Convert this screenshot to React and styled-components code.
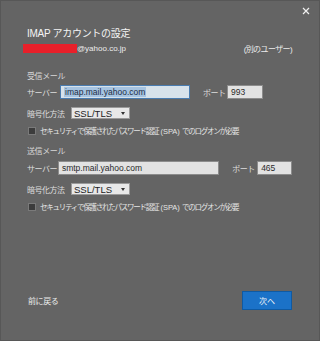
import React from 'react'
import styled, { createGlobalStyle } from 'styled-components'

const GlobalStyle = createGlobalStyle`
  html, body {
    margin: 0;
    padding: 0;
    background: #646464;
  }
  * {
    box-sizing: border-box;
  }
`

function SpaOption() {
  return (
    <CheckRow top={7}>
      <CheckBox />
      <CheckText>
        セキュリティで保護されたパスワード認証<Latin> (SPA) </Latin>でのログオンが必要
      </CheckText>
    </CheckRow>
  )
}

export default function App() {
  return (
    <>
      <GlobalStyle />
      <Dialog>
        <TopBar>
          <CloseButton aria-label="close">
            <svg width="8" height="8" viewBox="0 0 8 8">
              <path d="M1 1 L7 7 M7 1 L1 7" stroke="#f0f0f0" strokeWidth="1.2" fill="none" />
            </svg>
          </CloseButton>
        </TopBar>
        <Body>
          <Title>IMAP アカウントの設定</Title>
          <AccountRow>
            <Email>
              <Redact />
              @yahoo.co.jp
            </Email>
            <OtherUser>(別のユーザー)</OtherUser>
          </AccountRow>

          <SectionLabel top={16}>受信メール</SectionLabel>
          <FieldRow top={2}>
            <Label width={33}>サーバー</Label>
            <TextBox width={130} focused>
              <Selected>imap.mail.yahoo.com</Selected>
            </TextBox>
            <Label width={24} gap={13}>ポート</Label>
            <TextBox width={36}>993</TextBox>
          </FieldRow>
          <FieldRow top={8}>
            <Label width={44}>暗号化方法</Label>
            <Select>
              SSL/TLS
              <Arrow />
            </Select>
          </FieldRow>
          <SpaOption />

          <SectionLabel top={11}>送信メール</SectionLabel>
          <FieldRow top={3}>
            <Label width={31}>サーバー</Label>
            <TextBox width={162}>smtp.mail.yahoo.com</TextBox>
            <Label width={25} gap={13}>ポート</Label>
            <TextBox width={35}>465</TextBox>
          </FieldRow>
          <FieldRow top={8}>
            <Label width={44}>暗号化方法</Label>
            <Select>
              SSL/TLS
              <Arrow />
            </Select>
          </FieldRow>
          <SpaOption />

          <Footer>
            <BackLink>前に戻る</BackLink>
            <PrimaryButton>次へ</PrimaryButton>
          </Footer>
        </Body>
      </Dialog>
    </>
  )
}

const Dialog = styled.div`
  width: 320px;
  height: 341px;
  background: #646464;
  border: 1px solid #575757;
  display: flex;
  flex-direction: column;
  font-family: "Liberation Sans", "Noto Sans CJK JP", sans-serif;
  color: #e6e6e6;
`
const TopBar = styled.div`
  height: 20px;
  display: flex;
  justify-content: flex-end;
  align-items: center;
  padding-right: 8px;
`
const CloseButton = styled.div`
  width: 10px;
  height: 10px;
  display: flex;
  align-items: center;
  justify-content: center;
`
const Body = styled.div`
  flex: 1;
  display: flex;
  flex-direction: column;
  padding: 0 27px 30px 26px;
`
const Title = styled.div`
  margin-top: 6px;
  height: 14px;
  line-height: 14px;
  font-size: 10px;
  letter-spacing: -0.3px;
  color: #f4f4f4;
`
const AccountRow = styled.div`
  height: 14px;
  display: flex;
  justify-content: space-between;
  align-items: center;
  font-size: 8px;
`
const Email = styled.div`
  display: flex;
  align-items: center;
  margin-left: -4px;
  color: #ececec;
`
const Redact = styled.span`
  display: inline-block;
  width: 54px;
  height: 9px;
  background: #e8202a;
`
const OtherUser = styled.div`
  letter-spacing: -0.6px;
  color: #ececec;
`
const SectionLabel = styled.div`
  margin-top: ${p => p.top}px;
  height: 12px;
  line-height: 12px;
  font-size: 8px;
  letter-spacing: -0.4px;
  color: #d8d8d8;
`
const FieldRow = styled.div`
  margin-top: ${p => p.top}px;
  display: flex;
  align-items: center;
`
const Label = styled.div`
  width: ${p => p.width}px;
  margin-left: ${p => p.gap || 0}px;
  font-size: 8px;
  letter-spacing: -0.5px;
  color: #dedede;
  white-space: nowrap;
`
const TextBox = styled.div`
  width: ${p => p.width}px;
  height: 14px;
  display: flex;
  align-items: center;
  padding-left: 3px;
  font-size: 8.5px;
  color: #2a2a2a;
  background: ${p => (p.focused ? '#d7e2eb' : '#e2e2e2')};
  border: 1px solid ${p => (p.focused ? '#4a7cb0' : '#8c8c8c')};
`
const Selected = styled.span`
  background: #a6c4e2;
  color: #1e2e44;
  line-height: 10px;
  padding: 0 1px;
`
const Select = styled.div`
  width: 59px;
  height: 12px;
  display: flex;
  align-items: center;
  justify-content: space-between;
  padding: 0 4px 0 2px;
  font-size: 9.5px;
  color: #222;
  background: #e8e8e8;
  border: 1px solid #9a9a9a;
`
const Arrow = styled.span`
  width: 0;
  height: 0;
  border-left: 2.5px solid transparent;
  border-right: 2.5px solid transparent;
  border-top: 3px solid #333;
`
const CheckRow = styled.div`
  margin-top: ${p => p.top}px;
  height: 9px;
  display: flex;
  align-items: center;
  gap: 4px;
  padding-left: 1px;
`
const CheckBox = styled.span`
  flex: none;
  width: 8px;
  height: 8px;
  background: #3c3c3c;
  border: 1px solid #7a7a7a;
`
const CheckText = styled.span`
  font-size: 7.5px;
  letter-spacing: -1.25px;
  color: #e4e4e4;
  white-space: nowrap;
`
const Latin = styled.span`
  letter-spacing: 0;
`
const Footer = styled.div`
  margin-top: auto;
  height: 19px;
  display: flex;
  justify-content: space-between;
  align-items: center;
`
const BackLink = styled.div`
  font-size: 8px;
  letter-spacing: -0.4px;
  color: #ececec;
  padding-left: 1px;
`
const PrimaryButton = styled.div`
  width: 50px;
  height: 19px;
  display: flex;
  align-items: center;
  justify-content: center;
  font-size: 8px;
  color: #f2f6fa;
  background: #1b72c8;
  border: 1px solid #0f5aa3;
`
